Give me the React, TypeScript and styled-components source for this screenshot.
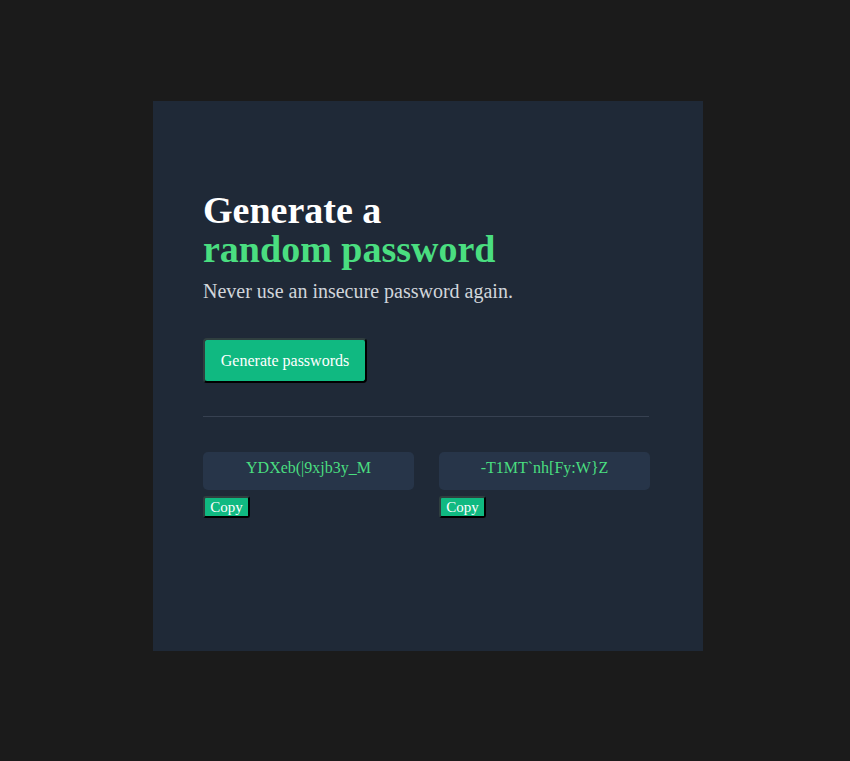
import React from "react";
import styled, { createGlobalStyle } from "styled-components";

const Global = createGlobalStyle`
  html, body { margin: 0; padding: 0; background: #1b1b1b; }
  body { font-family: "Liberation Serif", "Times New Roman", serif; }
`;

const Page = styled.div`
  min-height: 761px;
  display: flex;
  justify-content: center;
  align-items: flex-start;
  padding: 101px 0 0 6px;
  box-sizing: border-box;
`;

const Card = styled.main`
  width: 550px;
  height: 550px;
  background: #1f2937;
  box-sizing: border-box;
  padding: 90px 50px 0 50px;
  display: flex;
  flex-direction: column;
`;

const Title = styled.h1`
  margin: 0;
  font-size: 38px;
  line-height: 39px;
  font-weight: bold;
  color: #ffffff;
`;

const Accent = styled.span`
  display: block;
  color: #4ade80;
`;

const Subtitle = styled.p`
  margin: 11px 0 0 0;
  font-size: 20px;
  color: #d1d5db;
`;

const GenerateButton = styled.button`
  align-self: flex-start;
  margin-top: 35px;
  width: 164px;
  height: 45px;
  background: #10b981;
  color: #ffffff;
  font-family: inherit;
  font-size: 16px;
  border-radius: 4px;
  border: 2px solid;
  border-color: #2f3f3f #000 #000 #2f3f3f;
  cursor: pointer;
  padding: 0;
`;

const Divider = styled.hr`
  margin: 33px 0 0 0;
  width: 446px;
  border: none;
  border-top: 1px solid #374151;
`;

const Grid = styled.div`
  margin-top: 35px;
  display: grid;
  grid-template-columns: 211px 211px;
  column-gap: 25px;
`;

const Column = styled.div`
  display: flex;
  flex-direction: column;
  align-items: flex-start;
  gap: 6px;
`;

const PasswordBox = styled.div`
  width: 100%;
  height: 38px;
  background: #273549;
  border-radius: 5px;
  color: #4ade80;
  font-size: 16px;
  text-align: center;
  padding-top: 7px;
  box-sizing: border-box;
`;

const CopyButton = styled.button`
  background: #10b981;
  color: #ffffff;
  font-family: inherit;
  font-size: 15px;
  line-height: 18px;
  border-radius: 3px;
  border: 2px solid;
  border-color: #2f3f3f #000 #000 #2f3f3f;
  padding: 0 4px;
  height: 22px;
  width: 47px;
  cursor: pointer;
`;

const passwords = ["YDXeb(|9xjb3y_M", "-T1MT`nh[Fy:W}Z"];

export default function App() {
  return (
    <>
      <Global />
      <Page>
        <Card>
          <Title>
            Generate a
            <Accent>random password</Accent>
          </Title>
          <Subtitle>Never use an insecure password again.</Subtitle>
          <GenerateButton>Generate passwords</GenerateButton>
          <Divider />
          <Grid>
            {passwords.map((p) => (
              <Column key={p}>
                <PasswordBox>{p}</PasswordBox>
                <CopyButton>Copy</CopyButton>
              </Column>
            ))}
          </Grid>
        </Card>
      </Page>
    </>
  );
}
